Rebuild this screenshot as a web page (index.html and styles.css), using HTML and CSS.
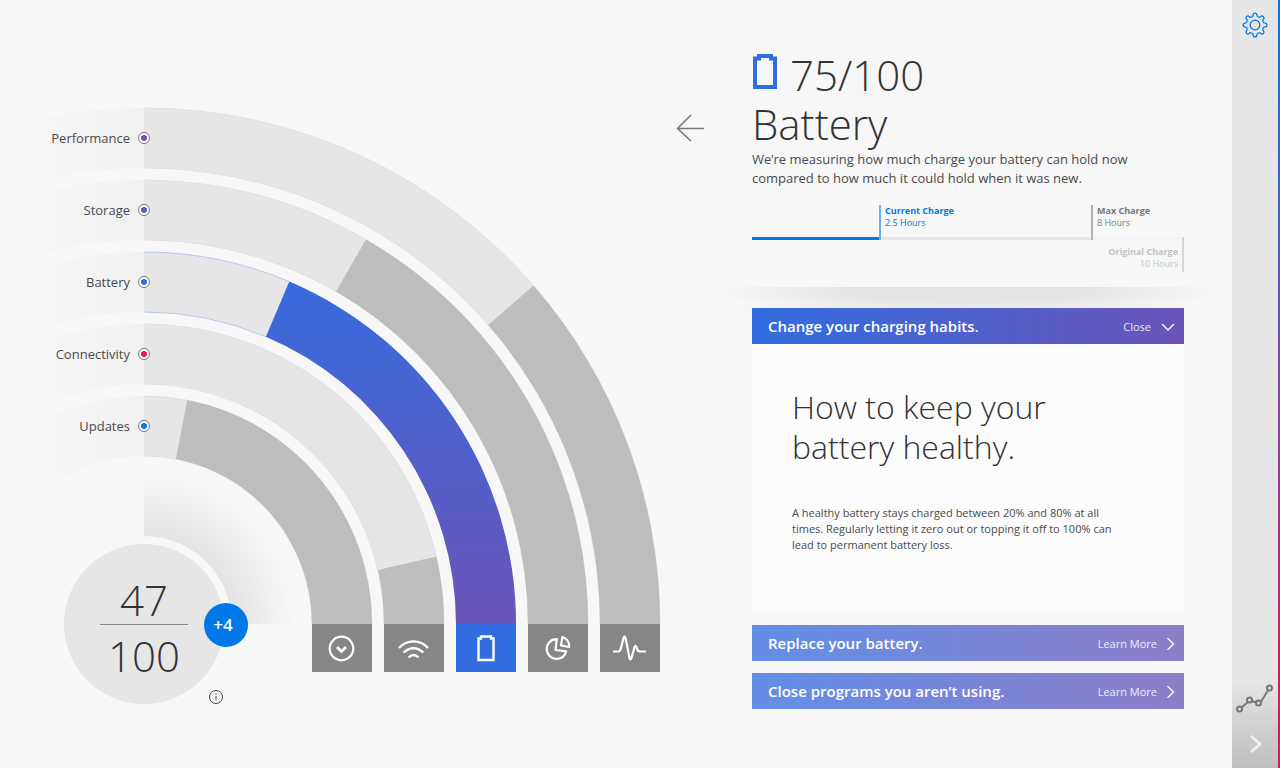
FILE: index.html
```html
<!DOCTYPE html>
<html lang="en">
<head>
    <meta charset="UTF-8">
    <meta name="viewport" content="width=device-width, initial-scale=1.0">
    <title>Device Health - Battery</title>
    <link rel="stylesheet" href="styles.css">
</head>
<body>
    <div class="app">
        <section class="chart">
            <svg class="rings" width="672" height="720" viewBox="0 0 672 720" aria-hidden="true">
                <defs>
                    <linearGradient id="fade" gradientUnits="userSpaceOnUse" x1="10" y1="0" x2="144" y2="0">
                        <stop offset="0" stop-color="#f7f7f7"/>
                        <stop offset="1" stop-color="#f1f1f1"/>
                    </linearGradient>
                    <linearGradient id="battery-fill" gradientUnits="userSpaceOnUse" x1="0" y1="252" x2="0" y2="624">
                        <stop offset="0" stop-color="#326de0"/>
                        <stop offset="1" stop-color="#6b54b8"/>
                    </linearGradient>
                    <radialGradient id="core" gradientUnits="userSpaceOnUse" cx="144" cy="624" r="152">
                        <stop offset="0.58" stop-color="#e4e4e4"/>
                        <stop offset="1" stop-color="#f7f7f7"/>
                    </radialGradient>
                </defs>

                <!-- faded left side of each ring -->
                <g fill="none" stroke="url(#fade)" stroke-width="60">
                    <path d="M144 138A486 486 0 0 0 -342 624"/>
                    <path d="M144 210A414 414 0 0 0 -270 624"/>
                    <path d="M144 282A342 342 0 0 0 -198 624"/>
                    <path d="M144 354A270 270 0 0 0 -126 624"/>
                    <path d="M144 426A198 198 0 0 0 -54 624"/>
                </g>

                <!-- full tracks -->
                <g fill="#e6e6e6">
                    <path d="M144 108A516 516 0 0 1 660 624H600A456 456 0 0 0 144 168Z"/>
                    <path d="M144 180A444 444 0 0 1 588 624H528A384 384 0 0 0 144 240Z"/>
                    <path d="M144 252A372 372 0 0 1 516 624H456A312 312 0 0 0 144 312Z"/>
                    <path d="M144 324A300 300 0 0 1 444 624H384A240 240 0 0 0 144 384Z"/>
                    <path d="M144 396A228 228 0 0 1 372 624H312A168 168 0 0 0 144 456Z"/>
                </g>

                <!-- thin edges of the tracks -->
                <g fill="none" stroke="#d8d8d8" stroke-width="0.600">
                    <path d="M144 108A516 516 0 0 1 660 624M144 168A456 456 0 0 1 600 624"/>
                    <path d="M144 180A444 444 0 0 1 588 624M144 240A384 384 0 0 1 528 624"/>
                    <path stroke="#8fabee" d="M144 252A372 372 0 0 1 289.300 281.600M144 312A312 312 0 0 1 265.900 336.800"/>
                    <path d="M144 324A300 300 0 0 1 444 624M144 384A240 240 0 0 1 384 624"/>
                    <path d="M144 396A228 228 0 0 1 372 624M144 456A168 168 0 0 1 312 624"/>
                </g>

                <!-- filled part of each ring -->
                <g fill="#bdbdbd">
                    <path d="M533.5 285.6A516 516 0 0 1 660 624H600A456 456 0 0 0 488.2 325Z"/>
                    <path d="M366 239.5A444 444 0 0 1 588 624H528A384 384 0 0 0 336 291.4Z"/>
                    <path fill="url(#battery-fill)" d="M289.3 281.6A372 372 0 0 1 516 624H456A312 312 0 0 0 265.9 336.8Z"/>
                    <path d="M436.4 556.5A300 300 0 0 1 444 624H384A240 240 0 0 0 377.9 570Z"/>
                    <path d="M187.2 400.1A228 228 0 0 1 372 624H312A168 168 0 0 0 175.9 459Z"/>
                </g>

                <path fill="url(#core)" d="M144 472A152 152 0 0 1 296 624H232A88 88 0 0 0 144 536Z"/>
            </svg>

            <div class="chart-content">
                <ul class="labels">
                    <li>Performance <span class="dot performance"></span></li>
                    <li>Storage <span class="dot storage"></span></li>
                    <li>Battery <span class="dot battery"></span></li>
                    <li>Connectivity <span class="dot connectivity"></span></li>
                    <li>Updates <span class="dot updates"></span></li>
                </ul>

                <div class="chart-base">
                    <div class="score">
                        <span class="score-value">47</span>
                        <span class="score-total">100</span>
                        <span class="badge">+4</span>
                        <button class="info" aria-label="About this score">
                            <svg width="16" height="16" viewBox="0 0 16 16" fill="none" stroke="#444">
                                <circle cx="8" cy="8" r="6.5"/>
                                <path d="M8 7v4.200M8 4.600v1.200"/>
                            </svg>
                        </button>
                    </div>
                    <nav class="tabs">
                        <button aria-label="Updates">
                            <svg width="36" height="36" viewBox="0 0 36 36">
                                <circle cx="17.500" cy="18.500" r="11.800"/>
                                <path d="M13 17l4.500 4.500L22 17" stroke-width="2.800"/>
                            </svg>
                        </button>
                        <button aria-label="Connectivity">
                            <svg width="36" height="36" viewBox="0 0 36 36">
                                <path d="M3 18C11 9.200 24 9.200 32 18M7.700 22.700c6-6 13.600-6 19.600 0M12.500 27.500c3.300-3.200 6.700-3.200 10 0" stroke-width="2.400"/>
                            </svg>
                        </button>
                        <button class="active" aria-label="Battery">
                            <svg width="36" height="36" viewBox="0 0 36 36">
                                <path d="M10.500 8.500H13v-2h10v2h2.500V30h-15z" stroke-width="2.400"/>
                            </svg>
                        </button>
                        <button aria-label="Storage">
                            <svg width="36" height="36" viewBox="0 0 36 36">
                                <path d="M16.800 9.200C10.700 9.200 6.700 13.800 6.700 19c0 5.500 4.500 9.800 10 9.800 5 0 8.300-3 9.500-7.500L15.500 20z" stroke-linejoin="round"/>
                                <path d="M22.300 7.200c4 .800 7.200 4.500 7 9.800l-8.300-1.500z" stroke-linejoin="round"/>
                            </svg>
                        </button>
                        <button aria-label="Performance">
                            <svg width="36" height="36" viewBox="0 0 36 36">
                                <path d="M1 21.500h5.500c2 0 2.200-2 3-5.500l2-8c.4-2 1.600-2 2 0l4 20c.3 2 1.500 2 2 0l3-11c.5-1.500 1.500-1.500 2 0l1 3c.5 1.200 1.200 1.500 2.500 1.500H34"/>
                            </svg>
                        </button>
                    </nav>
                </div>
            </div>
        </section>

        <main class="detail">
            <button class="back" aria-label="Back">
                <svg width="28" height="28" viewBox="0 0 28 28" fill="none" stroke="#777" stroke-width="1.500">
                    <path d="M15 1L1.500 14.500 15 27M1.500 14.500H28"/>
                </svg>
            </button>

            <header class="summary">
                <h1>
                    <span class="summary-score">
                        <svg width="26" height="36" viewBox="0 0 26 36" fill="none" stroke="#326de0" stroke-width="4">
                            <path d="M3 4.500H7V2H19V4.500H23V33H3Z"/>
                        </svg>
                        75/100
                    </span>
                    Battery
                </h1>
                <p>We’re measuring how much charge your battery can hold now compared to how much it could hold when it was new.</p>
            </header>

            <div class="meter">
                <div class="line-current"></div>
                <div class="line-max"></div>
                <div class="line-original"></div>
                <div class="mark mark-current"><strong>Current Charge</strong><span>2.5 Hours</span></div>
                <div class="mark mark-max"><strong>Max Charge</strong><span>8 Hours</span></div>
                <div class="mark mark-original"><strong>Original Charge</strong><span>10 Hours</span></div>
            </div>

            <div class="shade"></div>

            <section class="tips">
                <article class="tip open">
                    <button class="tip-header">
                        <span class="tip-title">Change your charging habits.</span>
                        <span class="tip-action">Close</span>
                        <svg width="14" height="12" viewBox="0 0 14 12"><path d="M1 4l6 6 6-6"/></svg>
                    </button>
                    <div class="tip-body">
                        <h2>How to keep your<br>battery healthy.</h2>
                        <p>A healthy battery stays charged between 20% and 80% at all times. Regularly letting it zero out or topping it off to 100% can lead to permanent battery loss.</p>
                    </div>
                </article>
                <article class="tip">
                    <button class="tip-header">
                        <span class="tip-title">Replace your battery.</span>
                        <span class="tip-action">Learn More</span>
                        <svg width="8" height="14" viewBox="0 0 8 14"><path d="M0.500 2l6 6-6 6"/></svg>
                    </button>
                </article>
                <article class="tip">
                    <button class="tip-header">
                        <span class="tip-title">Close programs you aren’t using.</span>
                        <span class="tip-action">Learn More</span>
                        <svg width="8" height="14" viewBox="0 0 8 14"><path d="M0.500 2l6 6-6 6"/></svg>
                    </button>
                </article>
            </section>
        </main>

        <aside class="rail">
            <button aria-label="Settings">
                <svg width="26" height="26" viewBox="-13 -13 26 26" fill="none" stroke="#0078e7" stroke-width="1.300">
                    <defs>
                        <path id="tooth" d="M-3.300 -8C-2.300 -8.400 -1.900 -9 -1.900 -10A1.900 1.900 0 0 1 1.900 -10C1.900 -9 2.300 -8.400 3.300 -8"/>
                    </defs>
                    <use href="#tooth"/>
                    <use href="#tooth" transform="rotate(45)"/>
                    <use href="#tooth" transform="rotate(90)"/>
                    <use href="#tooth" transform="rotate(135)"/>
                    <use href="#tooth" transform="rotate(180)"/>
                    <use href="#tooth" transform="rotate(225)"/>
                    <use href="#tooth" transform="rotate(270)"/>
                    <use href="#tooth" transform="rotate(315)"/>
                    <circle r="4.800"/>
                </svg>
            </button>
            <div class="rail-bottom">
                <button aria-label="History">
                    <svg width="38" height="30" viewBox="0 0 38 30" fill="none" stroke="#777" stroke-width="2">
                        <path d="M5.500 23.500L12 18M16.200 17.200l4.800 1.600M25 17.500L32 6.500"/>
                        <circle cx="3.500" cy="25" r="2.500"/>
                        <circle cx="13.500" cy="16" r="2.500"/>
                        <circle cx="22.500" cy="19" r="2.500"/>
                        <circle cx="33.500" cy="4" r="2.500"/>
                    </svg>
                </button>
                <button aria-label="Expand">
                    <svg width="20" height="20" viewBox="0 0 20 20" fill="none" stroke="#eee" stroke-width="3">
                        <path d="M6 2l9 8-9 8"/>
                    </svg>
                </button>
            </div>
        </aside>
    </div>
</body>
</html>
```
FILE: styles.css
```css
* {
    box-sizing: border-box;
}
body {
    margin: 0;
    font-family: "Open Sans", "Noto Sans", sans-serif;
    font-size: 13px;
    background-color: #f7f7f7;
    color: #333;
}
h1, h2, p, ul {
    margin: 0;
    padding: 0;
}
h1, h2 {
    font-weight: 300;
}
button {
    padding: 0;
    border: none;
    background: none;
    font-family: inherit;
    color: inherit;
    cursor: pointer;
}
svg {
    display: block;
}
.app {
    display: grid;
    grid-template-columns: auto 1fr 48px;
    min-height: 100vh;
}

/* Ring chart */
.chart {
    display: grid;
    align-items: start;
}
.rings, .chart-content {
    grid-area: 1 / 1;
}
.chart-content {
    padding-top: 102px;
}
.labels {
    width: 150px;
    list-style: none;
}
.labels li {
    display: flex;
    align-items: center;
    justify-content: flex-end;
    gap: 8px;
    height: 72px;
    color: #4a4a4a;
    line-height: 20px;
}
.dot {
    width: 12px;
    height: 12px;
    border: 1px solid #777;
    border-radius: 50%;
    padding: 2px;
    background-color: #fff;
}
.dot::before {
    content: "";
    display: block;
    width: 6px;
    height: 6px;
    border-radius: 50%;
    background-color: currentColor;
}
.performance {
    color: #7f48ad;
}
.storage {
    color: #4b5fcf;
}
.battery {
    color: #326de0;
}
.connectivity {
    color: #e3145c;
}
.updates {
    color: #0078e7;
}
.chart-base {
    display: flex;
    gap: 88px;
    padding: 82px 12px 0 64px;
}
.score {
    position: relative;
    width: 160px;
    height: 160px;
    padding: 31px 36px 0;
    border-radius: 50%;
    background-color: #e6e6e6;
    text-align: center;
    font-size: 42px;
    font-weight: 300;
}
.score-value, .score-total {
    display: block;
}
.score-value {
    border-bottom: 1px solid #888;
    line-height: 49px;
}
.score-total {
    line-height: 61px;
}
.badge {
    position: absolute;
    top: 59px;
    right: -24px;
    width: 44px;
    height: 44px;
    padding-right: 6px;
    border-radius: 50%;
    background-color: #0078e7;
    color: #fff;
    font-size: 17px;
    font-weight: 600;
    line-height: 44px;
}
.info {
    position: absolute;
    right: 0;
    bottom: -1px;
}
.tabs {
    display: flex;
    gap: 12px;
    margin-top: 80px;
}
.tabs button {
    display: grid;
    place-items: center;
    width: 60px;
    height: 48px;
    background-color: #868686;
}
.tabs .active {
    background-color: #326de0;
}
.tabs svg {
    fill: none;
    stroke: #fff;
    stroke-width: 2.2;
}

/* Battery detail */
.detail {
    position: relative;
    padding: 50px 48px 24px 80px;
}
.back {
    position: absolute;
    top: 114px;
    left: 4px;
}
.summary h1 {
    font-size: 42px;
    line-height: 49px;
}
.summary-score {
    display: flex;
    align-items: center;
    gap: 12px;
}
.summary-score svg {
    align-self: flex-start;
    margin-top: 4px;
}
.summary p {
    max-width: 400px;
    margin-top: 2px;
    color: #4a4a4a;
    line-height: 19px;
}
.meter {
    display: grid;
    grid-template-columns: 127fr 212fr 93fr;
    grid-template-rows: 32px 3px 32px;
    margin-top: 17px;
    font-size: 9px;
    line-height: 12px;
}
.line-current {
    grid-area: 2 / 1;
    background-color: #0078e7;
}
.line-max {
    grid-area: 2 / 2;
    background-color: #e6e6e6;
}
.line-original {
    grid-area: 2 / 3;
    background-color: #f2f2f2;
}
.mark strong, .mark span {
    display: block;
}
.mark-current {
    grid-area: 1 / 2 / 3 / 3;
    padding-left: 4px;
    border-left: 2px solid #6eaef0;
    color: #0078e7;
}
.mark-max {
    grid-area: 1 / 3 / 3 / 4;
    padding-left: 4px;
    border-left: 2px solid #b0b0b0;
    color: #777;
}
.mark-original {
    grid-area: 2 / 1 / 4 / 4;
    justify-self: end;
    padding: 9px 4px 0 0;
    border-right: 2px solid #d6d6d6;
    color: #c2c2c2;
    text-align: right;
}
.shade {
    height: 21px;
    margin: 15px -40px 0;
    background: radial-gradient(ellipse 50% 170% at 50% 0, #e3e3e3 40%, #f7f7f7 100%);
}

/* Tips accordion */
.tips {
    display: grid;
    gap: 12px;
}
.tip-header {
    display: flex;
    align-items: center;
    width: 100%;
    height: 36px;
    padding: 0 9px 0 16px;
    background: linear-gradient(to right, #628ee6, #8d7dc9);
    color: #fff;
    text-align: left;
}
.open .tip-header {
    background: linear-gradient(to right, #326de0, #6b54b8);
}
.tip-header svg {
    margin-left: 10px;
    fill: none;
    stroke: #fff;
    stroke-width: 1.3;
}
.tip-title {
    flex: 1;
    font-size: 15px;
    font-weight: 600;
}
.tip-action {
    font-size: 11px;
    opacity: 0.85;
}
.tip-body {
    padding: 43px 40px 60px;
    background-color: #fcfcfc;
}
.tip-body h2 {
    font-size: 32px;
    line-height: 40px;
}
.tip-body p {
    max-width: 330px;
    margin-top: 38px;
    color: #4a4a4a;
    font-size: 11px;
    line-height: 16px;
}

/* Right rail */
.rail {
    display: flex;
    flex-direction: column;
    align-items: center;
    justify-content: space-between;
    padding-top: 12px;
    border-right: 2px solid;
    border-image: linear-gradient(#0078e7, #7f48ad 50%, #e3145c 85%) 1;
    background: linear-gradient(to top, #bebebe, #e6e6e6 90px);
}
.rail-bottom {
    display: grid;
    justify-items: center;
    gap: 20px;
    padding-bottom: 14px;
}
```
